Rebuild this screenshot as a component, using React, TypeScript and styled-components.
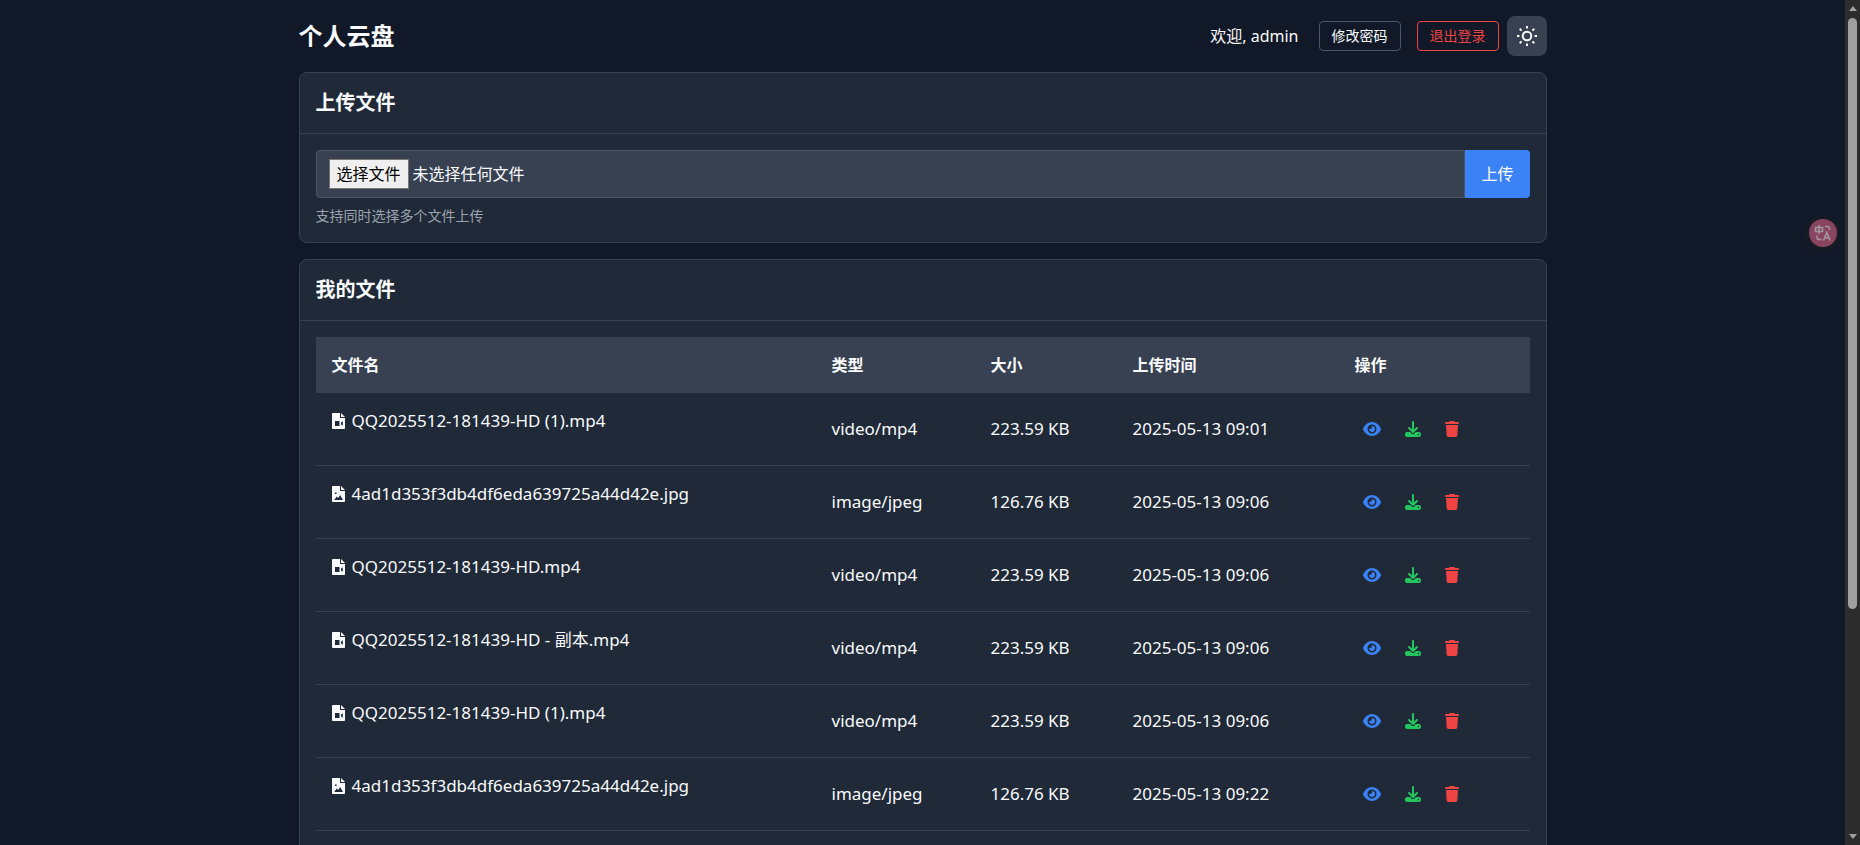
import React, { useState } from "react";
import styled, { createGlobalStyle, css } from "styled-components";
import { FaDownload, FaEye, FaTrash } from "react-icons/fa6";

const color = {
  page: "#111827",
  card: "#1f2937",
  line: "#374151",
  field: "#374151",
  fieldLine: "#4b5563",
  text: "#f9fafb",
  muted: "#9ca3af",
  blue: "#3b82f6",
  green: "#22c55e",
  red: "#ef4444",
};

const GlobalStyle = createGlobalStyle`
  *, *::before, *::after { box-sizing: border-box; }
  html { background: ${color.page}; }
  body {
    margin: 0;
    color: ${color.text};
    font: 16px/24px "Noto Sans", "Noto Sans CJK SC", sans-serif;
  }
  button, input { font: inherit; }
  button { cursor: pointer; }
`;

const Shell = styled.div`
  display: flex;
  height: 100vh;
  overflow: hidden;
`;

const Main = styled.main`
  flex: 1;
  min-width: 0;
  overflow: hidden;
`;

const Container = styled.div`
  display: flex;
  flex-direction: column;
  gap: 16px;
  max-width: 1280px;
  min-height: calc(100vh + 32px);
  margin: 0 auto;
  padding: 16px;
`;

const Header = styled.header`
  display: flex;
  align-items: center;
  justify-content: space-between;
`;

const SiteTitle = styled.h1`
  margin: 0;
  font-size: 24px;
  line-height: 32px;
  font-weight: 700;
`;

const UserBar = styled.div`
  display: flex;
  align-items: center;
  gap: 16px;
`;

const Welcome = styled.span`
  margin-right: 4px;
`;

const OutlineButton = styled.button<{ $danger?: boolean }>`
  padding: 4px 12px;
  border: 1px solid ${(p) => (p.$danger ? color.red : color.fieldLine)};
  border-radius: 4px;
  background: transparent;
  color: ${(p) => (p.$danger ? color.red : color.text)};
  font-size: 14px;
  line-height: 20px;
`;

const SessionActions = styled.div`
  display: flex;
  align-items: center;
  gap: 8px;
`;

const ThemeButton = styled.button`
  display: grid;
  place-items: center;
  width: 40px;
  height: 40px;
  padding: 0;
  border: 0;
  border-radius: 8px;
  background: ${color.field};
  color: ${color.text};
`;

const Card = styled.section<{ $grow?: boolean }>`
  border: 1px solid ${color.line};
  border-radius: 8px;
  background: ${color.card};
  ${(p) => p.$grow && css`flex: 1;`}
`;

const CardHeader = styled.div`
  padding: 16px;
  border-bottom: 1px solid ${color.line};
`;

const CardTitle = styled.h2`
  margin: 0;
  font-size: 20px;
  line-height: 28px;
  font-weight: 700;
`;

const CardBody = styled.div`
  padding: 16px;
`;

const UploadForm = styled.form`
  display: flex;
`;

const HiddenFileInput = styled.input`
  position: absolute;
  width: 1px;
  height: 1px;
  opacity: 0;
  pointer-events: none;
`;

const FileField = styled.label`
  position: relative;
  display: flex;
  flex: 1;
  align-items: center;
  gap: 4px;
  height: 48px;
  padding: 0 12px;
  border: 1px solid ${color.fieldLine};
  border-radius: 4px 0 0 4px;
  background: ${color.field};
`;

const PickLabel = styled.span`
  padding: 2px 7px;
  border: 1px solid #767676;
  background: #efefef;
  color: #000;
`;

const SubmitButton = styled.button`
  padding: 8px 16px;
  border: 0;
  border-radius: 0 4px 4px 0;
  background: ${color.blue};
  color: #fff;
`;

const Hint = styled.p`
  margin: 8px 0 0;
  color: ${color.muted};
  font-size: 14px;
  line-height: 20px;
`;

const FileTable = styled.table`
  width: 100%;
  table-layout: fixed;
  border-collapse: separate;
  border-spacing: 0;
`;

const Column = styled.col<{ $width?: number }>`
  ${(p) => p.$width && css`width: ${p.$width}px;`}
`;

const HeadCell = styled.th`
  padding: 16px;
  background: ${color.field};
  text-align: left;
  font-weight: 700;
`;

const Cell = styled.td<{ $top?: boolean }>`
  padding: 16px;
  border-bottom: 1px solid ${color.line};
  vertical-align: ${(p) => (p.$top ? "top" : "middle")};
  font-size: 17px;
`;

const FileName = styled.div`
  display: flex;
  align-items: center;
  gap: 7px;

  svg { flex: none; }
`;

const Actions = styled.div`
  display: flex;
  gap: 8px;
`;

const IconButton = styled.button<{ $color: string; $glyph: number }>`
  display: flex;
  align-items: center;
  height: 40px;
  padding: 8px;
  border: 0;
  background: transparent;
  color: ${(p) => p.$color};

  svg { width: ${(p) => p.$glyph}px; height: 16px; }
`;

const Scrollbar = styled.div`
  display: flex;
  flex-direction: column;
  align-items: center;
  width: 15px;
  padding: 6px 0;
  background: #2c2c2c;
`;

const Arrow = styled.span<{ $down?: boolean }>`
  border: solid transparent;
  border-width: 0 4px 5px;
  border-bottom-color: #9f9f9f;
  ${(p) => p.$down && css`transform: rotate(180deg);`}
`;

const Track = styled.div`
  flex: 1;
  width: 9px;
  margin: 7px 0;
`;

const Thumb = styled.div`
  height: 73%;
  border-radius: 5px;
  background: #9f9f9f;
`;

const TranslateButton = styled.button`
  position: fixed;
  top: 219px;
  right: 23px;
  display: grid;
  place-items: center;
  width: 28px;
  height: 28px;
  padding: 0;
  border: 0;
  border-radius: 50%;
  background: #89455f;
  box-shadow: 0 0 0 4px #151a23;
  color: #a3979f;
`;

const SunIcon = () => (
  <svg width="20" height="20" viewBox="0 0 20 20" fill="none" stroke="currentColor" strokeWidth="2" aria-hidden="true">
    <circle cx="10" cy="10" r="4.3" />
    <path d="M10 0v2.4M10 17.6V20M0 10h2.4M17.6 10H20M2.7 2.7l1.9 1.9M15.4 15.4l1.9 1.9M2.7 17.3l1.9-1.9M15.4 4.6l1.9-1.9" />
  </svg>
);

const TranslateIcon = () => (
  <svg width="18" height="18" viewBox="0 0 18 18" fill="none" stroke="currentColor" strokeWidth="1.6" aria-hidden="true">
    <path d="M1.5 3.5h7v4h-7zM5 1v9M11 2.5h2.5a2 2 0 0 1 2 2V6M3 11.5v2a2 2 0 0 0 2 2h2.5M9.5 16.5l3.3-8 3.3 8M10.8 13.7h4" />
  </svg>
);

const fileGlyphs = {
  video: "M3 8h4.5v5H3zM9 9.5l1.8-1.2v4.4L9 11.5z",
  image: "M3 6.5h1.6v1.6H3zM2.2 14l2.6-3.4 1.4 1.4 1.9-3L11 14z",
};

const FileIcon = ({ kind }: { kind: keyof typeof fileGlyphs }) => (
  <svg width="13" height="16" viewBox="0 0 13 16" fill="currentColor" fillRule="evenodd" aria-hidden="true">
    <path d={`M.8 0H8v5h5v10.2a.8.8 0 0 1-.8.8H.8a.8.8 0 0 1-.8-.8V.8A.8.8 0 0 1 .8 0z${fileGlyphs[kind]}`} />
    <path d="M9 0l4 4H9z" />
  </svg>
);

type FileRow = { id: number; name: string; type: string; size: string; time: string };

const files: FileRow[] = [
  { id: 1, name: "QQ2025512-181439-HD (1).mp4", type: "video/mp4", size: "223.59 KB", time: "2025-05-13 09:01" },
  { id: 2, name: "4ad1d353f3db4df6eda639725a44d42e.jpg", type: "image/jpeg", size: "126.76 KB", time: "2025-05-13 09:06" },
  { id: 3, name: "QQ2025512-181439-HD.mp4", type: "video/mp4", size: "223.59 KB", time: "2025-05-13 09:06" },
  { id: 4, name: "QQ2025512-181439-HD - 副本.mp4", type: "video/mp4", size: "223.59 KB", time: "2025-05-13 09:06" },
  { id: 5, name: "QQ2025512-181439-HD (1).mp4", type: "video/mp4", size: "223.59 KB", time: "2025-05-13 09:06" },
  { id: 6, name: "4ad1d353f3db4df6eda639725a44d42e.jpg", type: "image/jpeg", size: "126.76 KB", time: "2025-05-13 09:22" },
];

export default function App() {
  const [picked, setPicked] = useState("未选择任何文件");

  return (
    <Shell>
      <GlobalStyle />
      <Main>
        <Container>
          <Header>
            <SiteTitle>个人云盘</SiteTitle>
            <UserBar>
              <Welcome>欢迎, admin</Welcome>
              <OutlineButton type="button">修改密码</OutlineButton>
              <SessionActions>
                <OutlineButton type="button" $danger>退出登录</OutlineButton>
                <ThemeButton type="button" aria-label="切换主题"><SunIcon /></ThemeButton>
              </SessionActions>
            </UserBar>
          </Header>

          <Card>
            <CardHeader><CardTitle>上传文件</CardTitle></CardHeader>
            <CardBody>
              <UploadForm onSubmit={(e) => e.preventDefault()}>
                <FileField htmlFor="upload-files">
                  <HiddenFileInput
                    id="upload-files"
                    type="file"
                    multiple
                    onChange={(e) => {
                      const names = Array.from(e.target.files ?? [], (f) => f.name);
                      setPicked(names.length ? names.join(", ") : "未选择任何文件");
                    }}
                  />
                  <PickLabel>选择文件</PickLabel>
                  <span>{picked}</span>
                </FileField>
                <SubmitButton type="submit">上传</SubmitButton>
              </UploadForm>
              <Hint>支持同时选择多个文件上传</Hint>
            </CardBody>
          </Card>

          <Card $grow>
            <CardHeader><CardTitle>我的文件</CardTitle></CardHeader>
            <CardBody>
              <FileTable>
                <colgroup>
                  <Column />
                  <Column $width={159} />
                  <Column $width={142} />
                  <Column $width={222} />
                  <Column $width={191} />
                </colgroup>
                <thead>
                  <tr>
                    <HeadCell>文件名</HeadCell>
                    <HeadCell>类型</HeadCell>
                    <HeadCell>大小</HeadCell>
                    <HeadCell>上传时间</HeadCell>
                    <HeadCell>操作</HeadCell>
                  </tr>
                </thead>
                <tbody>
                  {files.map((file) => (
                    <tr key={file.id}>
                      <Cell $top>
                        <FileName>
                          <FileIcon kind={file.type.startsWith("video") ? "video" : "image"} />
                          <span>{file.name}</span>
                        </FileName>
                      </Cell>
                      <Cell>{file.type}</Cell>
                      <Cell>{file.size}</Cell>
                      <Cell>{file.time}</Cell>
                      <Cell>
                        <Actions>
                          <IconButton type="button" $color={color.blue} $glyph={18} aria-label="预览"><FaEye /></IconButton>
                          <IconButton type="button" $color={color.green} $glyph={16} aria-label="下载"><FaDownload /></IconButton>
                          <IconButton type="button" $color={color.red} $glyph={14} aria-label="删除"><FaTrash /></IconButton>
                        </Actions>
                      </Cell>
                    </tr>
                  ))}
                </tbody>
              </FileTable>
            </CardBody>
          </Card>
        </Container>
      </Main>
      <Scrollbar aria-hidden="true">
        <Arrow />
        <Track><Thumb /></Track>
        <Arrow $down />
      </Scrollbar>
      <TranslateButton type="button" aria-label="翻译"><TranslateIcon /></TranslateButton>
    </Shell>
  );
}
